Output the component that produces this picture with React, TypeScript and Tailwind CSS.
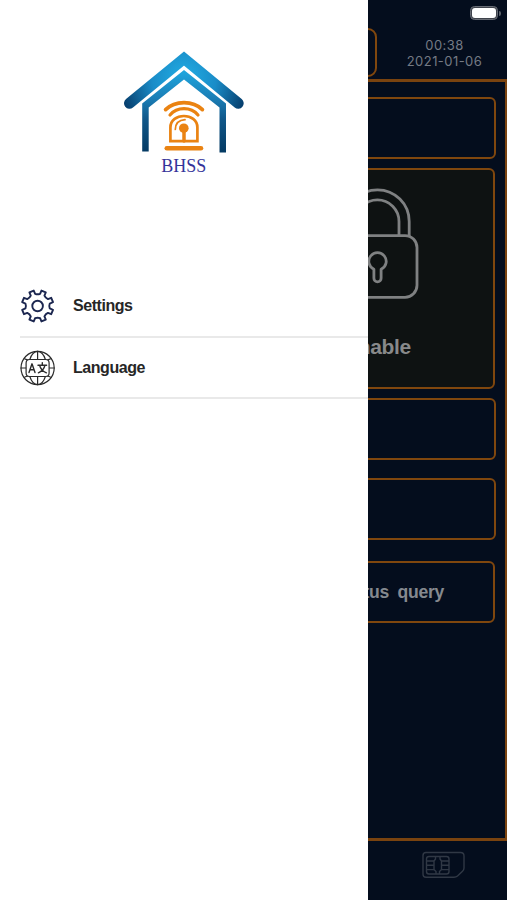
import type { ReactNode } from "react";
import clsx from "clsx";

const TEETH = 8;

// Outline of a cog with a gap (not a tooth) pointing straight up.
function cogPath(cx: number, cy: number) {
  const at = (deg: number, r: number) => {
    const a = ((deg - 90) * Math.PI) / 180;
    return `${(cx + r * Math.cos(a)).toFixed(2)} ${(cy + r * Math.sin(a)).toFixed(2)}`;
  };
  let d = "";
  for (let i = 0; i < TEETH; i++) {
    const mid = 22.5 + i * 45;
    d += `${i ? "L" : "M"}${at(mid - 11, 12.4)} L${at(mid - 8.5, 15.9)} L${at(mid + 8.5, 15.9)} L${at(mid + 11, 12.4)} Q${at(mid + 22.5, 11.2)} ${at(mid + 34, 12.4)} `;
  }
  return d + "Z";
}

function HouseLogo() {
  return (
    <svg width="124" height="106" viewBox="122 49 124 106" fill="none">
      <defs>
        <radialGradient id="roof" gradientUnits="userSpaceOnUse" cx="184" cy="78" r="64">
          <stop offset="0" stopColor="#22aee4" />
          <stop offset="0.5" stopColor="#1a8cc8" />
          <stop offset="1" stopColor="#07406f" />
        </radialGradient>
        <linearGradient id="walls" gradientUnits="userSpaceOnUse" x1="0" y1="70" x2="0" y2="152">
          <stop offset="0" stopColor="#1fa8e0" />
          <stop offset="0.35" stopColor="#1a7db5" />
          <stop offset="0.6" stopColor="#105789" />
          <stop offset="1" stopColor="#043a63" />
        </linearGradient>
      </defs>
      <path d="M129.5 103.2 L184 58.6 L238.2 103.2" stroke="url(#roof)" strokeWidth="11" strokeLinecap="round" strokeLinejoin="miter" />
      <path d="M184 70 L142.2 103.5 V151.5 H148.7 V107.5 L184 79.5 L219.5 107.5 V152.5 H226 V103.5 Z" fill="url(#walls)" />
      <g stroke="#ea8312" strokeLinecap="round">
        <path d="M165.6 109.6 C175 100.2 193 100.2 202.4 109.6" strokeWidth="3.7" />
        <path d="M170 115 C177 106.6 191 106.6 198 115" strokeWidth="3.2" />
        <path d="M170.4 141.2 V127.5 C170.4 112.2 197.4 112.2 197.4 127.5 V141.2 Z" strokeWidth="2.7" />
        <path d="M175.3 129.5 Q175.5 120.3 185 119.7" strokeWidth="1.7" />
        <path d="M184 129 V141" strokeWidth="3.5" />
        <path d="M166.8 148.2 H201" strokeWidth="4.6" />
      </g>
      <circle cx="183.8" cy="128.2" r="4.8" fill="#ea8312" />
    </svg>
  );
}

function CogIcon() {
  return (
    <svg width="36" height="36" viewBox="0 0 36 36" fill="none" stroke="#1c2750" strokeWidth="1.9" strokeLinejoin="round">
      <path d={cogPath(17.6, 18)} />
      <circle cx="17.6" cy="18" r="5.3" />
    </svg>
  );
}

function LanguageIcon() {
  return (
    <svg width="36" height="36" viewBox="0 0 36 36" fill="none" stroke="#2a2a2a" strokeWidth="1.2" strokeLinecap="round" strokeLinejoin="round">
      <circle cx="17.6" cy="18" r="16.6" />
      <path d="M17.6 1.4 V9.5 M17.6 26.5 V34.6 M1 18 H6.5 M29 18 H34.2" />
      <path d="M9.8 9.5 C11.6 4 14.6 1.4 17.6 1.4 C20.6 1.4 23.6 4 25.4 9.5 M9.8 26.5 C11.6 32 14.6 34.6 17.6 34.6 C20.6 34.6 23.6 32 25.4 26.5" />
      <path d="M4.5 8.8 C5.5 9.3 6.8 9.7 8 10 M30.7 8.8 C29.7 9.3 28.4 9.7 27.2 10 M4.5 27.2 C5.5 26.7 6.8 26.3 8 26 M30.7 27.2 C29.7 26.7 28.4 26.3 27.2 26" />
      <rect x="6.1" y="9.5" width="23" height="17" rx="3.5" fill="#fff" />
      <path d="M9 22.6 L12 13.8 L15 22.6 M10.2 19.8 H13.8" strokeWidth="1.4" />
      <path d="M18 15.2 H26.6 M22.3 12.8 V15 M25 15.2 C24.3 18.5 21.6 21.5 18.4 22.8 M19.6 15.2 C20.3 18.5 23 21.5 26.4 22.8" strokeWidth="1.4" />
    </svg>
  );
}

function LockIcon() {
  return (
    <svg width="84" height="112" viewBox="335 188 84 112" fill="none" stroke="#7f8182" strokeWidth="2.8" strokeLinejoin="round">
      <rect x="338" y="235.6" width="79" height="61.7" rx="12" />
      <path d="M345.8 236 V221.5 A31.7 31.7 0 0 1 409.2 221.5 V236" />
      <path d="M355.8 236 V221.5 A21.6 21.6 0 0 1 399 221.5 V236" />
      <path d="M373.9 269.3 A8.7 8.7 0 1 1 381.1 269.3 V278.2 A3.6 3.6 0 0 1 373.9 278.2 Z" />
    </svg>
  );
}

function SimIcon() {
  return (
    <svg width="44" height="28" viewBox="0 0 44 28" fill="none" stroke="#303845" strokeWidth="1.4" strokeLinejoin="round">
      <path d="M4 1.5 H38.5 Q42 1.5 42 5 V17 Q42 19 40.5 20.3 L35.5 25 Q34 26.3 32 26.3 H4 Q1 26.3 1 23.3 V4.5 Q1 1.5 4 1.5 Z" />
      <rect x="4.5" y="5.5" width="22.5" height="17.5" rx="2.5" />
      <path d="M4.5 10 H12 M4.5 14.3 H12 M4.5 18.6 H12 M19.5 10 H27 M19.5 14.3 H27 M19.5 18.6 H27" />
      <path d="M13.5 5.5 V8 L12 10 V18.6 L14 20.5 V23 M18 5.5 V8 L19.5 10 V18.6 L17.5 20.5 V23" />
    </svg>
  );
}

function Battery() {
  return (
    <div className="flex items-center gap-px">
      <div className="flex h-[14px] w-[28px] rounded-[4.5px] border border-[#686c75] bg-[#3f434c] p-px">
        <div className="flex-1 rounded-[3px] bg-white" />
      </div>
      <div className="h-[5px] w-[2px] rounded-r-full bg-[#5d626b]" />
    </div>
  );
}

function Panel({ className, children }: { className?: string; children?: ReactNode }) {
  return <div className={clsx("shrink-0 rounded-md border-2 border-[#80470e]", className)}>{children}</div>;
}

function MenuRow({ icon, label }: { icon: ReactNode; label: string }) {
  return (
    <li className="flex h-[61.5px] items-center gap-[17px] border-b-2 border-[#e9e9e9] pt-px">
      {icon}
      <span className="text-base font-bold tracking-[-0.45px] text-[#262626]">{label}</span>
    </li>
  );
}

function Dashboard() {
  return (
    <div className="flex h-full flex-col bg-[#040d1d]">
      <header className="flex h-[79px] shrink-0 justify-end">
        <div className="mt-[28px] h-[49px] w-[240px] rounded-[9px] border-2 border-[#80470e]" />
        <div className="flex w-[130px] flex-col">
          <div className="mt-[6px] flex justify-end pr-[6px]">
            <Battery />
          </div>
          <div className="mt-[17px] pl-[5px] text-center font-['Inter',sans-serif] text-[13px] leading-4 tracking-[0.45px] text-[#747a84]">
            <div>00:38</div>
            <div>2021-01-06</div>
          </div>
        </div>
      </header>

      <main className="flex h-[762px] shrink-0 flex-col border-y-[3px] border-r-2 border-[#7a430f] pl-[11px]">
        <Panel className="mr-[9px] mt-[15px] h-[62px]" />
        <Panel className="ml-[248px] mr-[10px] mt-[9px] flex h-[221px] flex-col items-center bg-[#0e1212] pt-[18px]">
          <LockIcon />
          <span className="mt-[35px] pl-px text-[21px] font-bold leading-6 tracking-[-0.4px] text-[#88898a]">Enable</span>
        </Panel>
        <Panel className="mr-[9px] mt-[9px] h-[62px]" />
        <Panel className="mr-[9px] mt-[18px] h-[62px]" />
        <Panel className="mr-[10px] mt-[21px] flex h-[62px] items-center justify-end pr-[49px]">
          <span className="text-[17.6px] font-bold tracking-[-0.3px] text-[#85898f] [word-spacing:4px]">Status query</span>
        </Panel>
      </main>

      <footer className="flex flex-1 justify-end pr-[41px] pt-[10px]">
        <SimIcon />
      </footer>
    </div>
  );
}

export default function App() {
  return (
    <div className="relative h-[900px] w-[507px] overflow-hidden font-['Liberation_Sans',Arial,sans-serif]">
      <Dashboard />

      {/* drawer slides over the dashboard */}
      <aside className="absolute inset-y-0 left-0 w-[367.5px] bg-white">
        <div className="flex h-[276px] flex-col items-center pt-[49px]">
          <HouseLogo />
          <div className="font-['Liberation_Serif',serif] text-[18px] leading-[22px] text-[#34349a]">BHSS</div>
        </div>
        <ul className="pl-5">
          <MenuRow icon={<CogIcon />} label="Settings" />
          <MenuRow icon={<LanguageIcon />} label="Language" />
        </ul>
      </aside>
    </div>
  );
}
